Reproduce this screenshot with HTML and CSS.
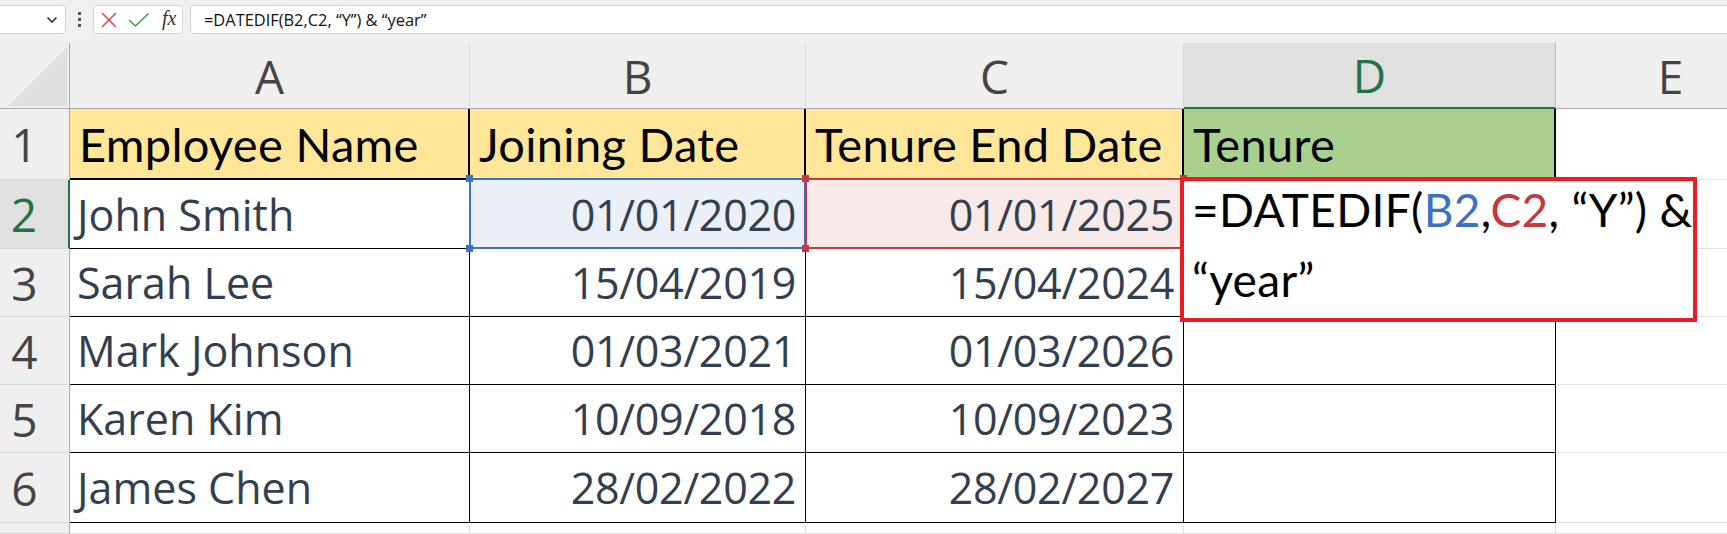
FILE: index.html
```html
<!DOCTYPE html>
<html>
<head>
<meta charset="utf-8">
<link rel="stylesheet" href="styles.css">
</head>
<body>
<div class="toolbar">
  <div class="namebox">
    <svg class="chev" width="12" height="8" viewBox="0 0 12 8"><polyline points="1.5,1.5 6,6 10.5,1.5" fill="none" stroke="#333" stroke-width="1.6"/></svg>
  </div>
  <div class="dots"><span></span><span></span><span></span></div>
  <div class="iconbox">
    <svg width="16" height="16" viewBox="0 0 16 16" class="ic-x"><path d="M1 1 L15 15 M15 1 L1 15" stroke="#E5434A" stroke-width="1.5" fill="none"/></svg>
    <svg width="22" height="16" viewBox="0 0 22 16" class="ic-ok"><path d="M1 8 L7.5 14 L20.5 1.5" stroke="#3E9F4C" stroke-width="1.6" fill="none"/></svg>
    <span class="fx">fx</span>
  </div>
  <div class="formulabox">=DATEDIF(B2,C2, “Y”) &amp; “year”</div>
</div>

<div class="sheet">
  <div class="corner"><svg width="69" height="65" viewBox="0 0 69 65"><polygon points="8,63 67,4 67,63" fill="#DFDFDF"/></svg></div>
  <div class="colhead">A</div>
  <div class="colhead">B</div>
  <div class="colhead">C</div>
  <div class="colhead active">D</div>
  <div class="colhead">E</div>

  <div class="rowhead">1</div>
  <div class="cell hdr gold">Employee Name</div>
  <div class="cell hdr gold">Joining Date</div>
  <div class="cell hdr gold">Tenure End Date</div>
  <div class="cell hdr green">Tenure</div>
  <div class="cell"></div>

  <div class="rowhead active">2</div>
  <div class="cell t">John Smith</div>
  <div class="cell t num ref blue"><span class="hd tl"></span><span class="hd tr"></span><span class="hd bl"></span><span class="hd br"></span>01/01/2020</div>
  <div class="cell t num ref red"><span class="hd tl"></span><span class="hd tr"></span><span class="hd bl"></span><span class="hd br"></span>01/01/2025</div>
  <div class="cell t"></div>
  <div class="cell"></div>

  <div class="rowhead">3</div>
  <div class="cell t">Sarah Lee</div>
  <div class="cell t num">15/04/2019</div>
  <div class="cell t num">15/04/2024</div>
  <div class="cell t"></div>
  <div class="cell"></div>

  <div class="rowhead">4</div>
  <div class="cell t">Mark Johnson</div>
  <div class="cell t num">01/03/2021</div>
  <div class="cell t num">01/03/2026</div>
  <div class="cell t"></div>
  <div class="cell"></div>

  <div class="rowhead">5</div>
  <div class="cell t">Karen Kim</div>
  <div class="cell t num">10/09/2018</div>
  <div class="cell t num">10/09/2023</div>
  <div class="cell t"></div>
  <div class="cell"></div>

  <div class="rowhead">6</div>
  <div class="cell t">James Chen</div>
  <div class="cell t num">28/02/2022</div>
  <div class="cell t num">28/02/2027</div>
  <div class="cell t"></div>
  <div class="cell"></div>

  <div class="rowhead"></div>
  <div class="cell"></div>
  <div class="cell"></div>
  <div class="cell"></div>
  <div class="cell"></div>
  <div class="cell"></div>

  <div class="callout">
    <div class="callout-text">=DATEDIF(<span class="rb">B2</span>,<span class="rr">C2</span>, “Y”) &amp;<br>“year”</div>
  </div>
</div>
</body>
</html>
```

FILE: styles.css
```css
html, body {
  margin: 0;
  padding: 0;
}
body {
  width: 1727px;
  height: 534px;
  overflow: hidden;
  background: #F0F0F0;
  font-family: "Open Sans", "Noto Sans", sans-serif;
}

/* ---------- toolbar ---------- */
.toolbar {
  height: 43px;
  box-sizing: border-box;
  padding-top: 5px;
  display: flex;
  align-items: flex-start;
  background: #F0F0F0;
}
.namebox {
  margin-left: -6px;
  width: 72px;
  height: 29px;
  box-sizing: border-box;
  background: #fff;
  border: 1px solid #D2D2D2;
  border-radius: 4px;
  display: flex;
  align-items: center;
  justify-content: flex-end;
  padding-right: 7px;
}
.chev { display: block; }
.dots {
  width: 27px;
  height: 29px;
  display: flex;
  flex-direction: column;
  align-items: center;
  justify-content: center;
  gap: 3px;
}
.dots span {
  width: 3px;
  height: 3px;
  background: #555;
  display: block;
}
.iconbox {
  width: 90px;
  height: 29px;
  box-sizing: border-box;
  background: #fff;
  border: 1px solid #D6D6D6;
  border-radius: 4px;
  display: flex;
  align-items: center;
  padding-left: 7px;
}
.ic-x { margin-top: 1px; }
.ic-ok { margin-left: 11px; }
.fx {
  margin-left: 12px;
  font-family: "Liberation Serif", serif;
  font-style: italic;
  font-size: 20px;
  color: #333;
  line-height: 1;
  margin-top: -3px;
}
.formulabox {
  margin-left: 7px;
  flex: 1;
  margin-right: -10px;
  height: 29px;
  box-sizing: border-box;
  background: #fff;
  border: 1px solid #D2D2D2;
  border-radius: 4px;
  padding-left: 13px;
  font-family: "Open Sans", sans-serif;
  font-size: 16.4px;
  line-height: 27px;
  color: #111;
  white-space: nowrap;
}

/* ---------- sheet ---------- */
.sheet {
  position: relative;
  display: grid;
  grid-template-columns: 70px 400px 336px 378px 372px 230px;
  grid-template-rows: 66px 71px 69px 68px 68px 68px 70px 1fr;
  height: 491px;
  background: #fff;
}
.corner {
  background: #EFEFEF;
  border-right: 1px solid #ABABAB;
  border-bottom: 1px solid #ABABAB;
  box-sizing: border-box;
}
.corner svg { display: block; }
.colhead {
  background: #EFEFEF;
  border-right: 1px solid #D8D8D8;
  border-bottom: 1px solid #ABABAB;
  box-sizing: border-box;
  display: flex;
  align-items: center;
  justify-content: center;
  font-family: "Open Sans", sans-serif;
  font-size: 46px;
  color: #444;
}
.colhead.active {
  background: #E0E0E0;
  border-right-color: #BDBDBD;
  border-bottom: 2px solid #217346;
  color: #217346;
}
.rowhead {
  background: #EFEFEF;
  border-right: 1px solid #ABABAB;
  border-bottom: 1px solid #D8D8D8;
  box-sizing: border-box;
  display: flex;
  align-items: center;
  justify-content: center;
  padding-right: 20px;
  font-family: "Open Sans", sans-serif;
  font-size: 46px;
  color: #444;
}
.rowhead.active {
  background: #E0E0E0;
  border-right: 2px solid #217346;
  color: #217346;
}

.cell {
  box-sizing: border-box;
  border-right: 1px solid #E1E1E1;
  border-bottom: 1px solid #E1E1E1;
  display: flex;
  align-items: center;
  padding: 0 9px 0 7px;
  font-family: "Open Sans", sans-serif;
  font-size: 43px;
  color: #333F4F;
  white-space: nowrap;
  background: #fff;
}
.cell.t {
  border-right-color: #000;
  border-bottom-color: #000;
}
.cell.num {
  justify-content: flex-end;
  letter-spacing: -0.3px;
}
.cell.hdr {
  font-family: "Lato", sans-serif;
  font-size: 47px;
  letter-spacing: 0.3px;
  color: #000;
  border-right: 2px solid #000;
  border-bottom: 2px solid #000;
  padding-left: 9px;
}
.gold { background: #FFE699; }
.green { background: #A9D08E; }

/* reference highlight (B2 / C2) */
.ref { position: relative; }
.ref::after {
  content: "";
  position: absolute;
  left: -1px;
  top: -2px;
  right: -1px;
  bottom: -1px;
  border: 2px solid;
  pointer-events: none;
  z-index: 2;
}
.ref.blue { background: #EAEFF8; }
.ref.blue::after { border-color: #3A70C6; }
.ref.red { background: #F9EAEA; }
.ref.red::after { border-color: #C7383E; }
.hd {
  position: absolute;
  width: 7px;
  height: 7px;
  z-index: 3;
}
.ref.blue .hd { background: #3A70C6; }
.ref.red .hd { background: #C7383E; }
.hd.tl { left: -4px; top: -5px; }
.hd.tr { right: -4px; top: -5px; }
.hd.bl { left: -4px; bottom: -4px; }
.hd.br { right: -4px; bottom: -4px; }

/* callout box */
.callout {
  position: absolute;
  left: 1180px;
  top: 134px;
  width: 517px;
  height: 145px;
  box-sizing: border-box;
  border: 4px solid #EC1C24;
  background: #fff;
  z-index: 5;
  padding-left: 8px;
  overflow: hidden;
}
.callout-text {
  font-family: "Lato", sans-serif;
  font-size: 46px;
  letter-spacing: 0.35px;
  line-height: 70px;
  margin-top: -6px;
  color: #000;
  white-space: nowrap;
}
.rb { color: #3A70C6; }
.rr { color: #C7383E; }
```
